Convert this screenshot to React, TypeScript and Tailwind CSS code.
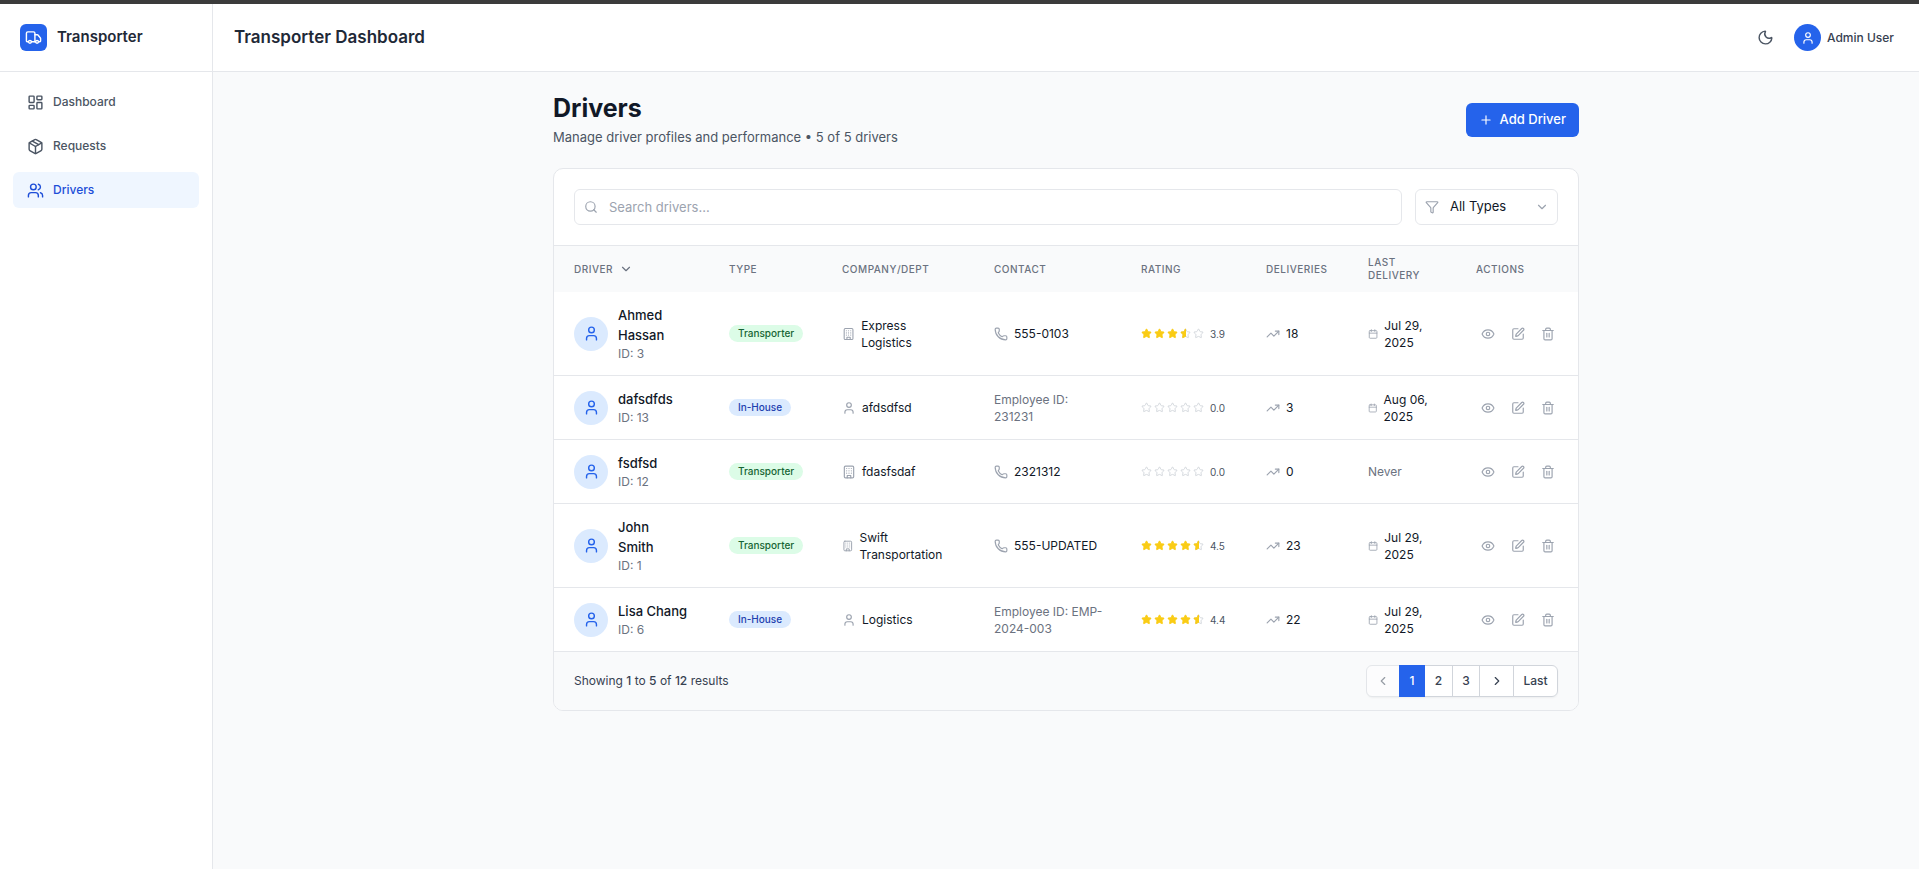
import React, { useState } from "react";
import {
  Calendar,
  ChevronDown,
  ChevronLeft,
  ChevronRight,
  Edit,
  Eye,
  Filter,
  LayoutDashboard,
  Moon,
  Package,
  Phone,
  Plus,
  Search,
  Star,
  Trash2,
  TrendingUp,
  Truck,
  User,
  Users,
} from "lucide-react";

type DriverType = "Transporter" | "In-House";

interface Driver {
  id: number;
  name: string;
  type: DriverType;
  company: string;
  phone?: string;
  employeeId?: string;
  rating: number;
  deliveries: number;
  lastDelivery?: string;
}

const drivers: Driver[] = [
  { id: 3, name: "Ahmed\nHassan", type: "Transporter", company: "Express Logistics", phone: "555-0103", rating: 3.9, deliveries: 18, lastDelivery: "Jul 29, 2025" },
  { id: 13, name: "dafsdfds", type: "In-House", company: "afdsdfsd", employeeId: "231231", rating: 0, deliveries: 3, lastDelivery: "Aug 06, 2025" },
  { id: 12, name: "fsdfsd", type: "Transporter", company: "fdasfsdaf", phone: "2321312", rating: 0, deliveries: 0 },
  { id: 1, name: "John\nSmith", type: "Transporter", company: "Swift Transportation", phone: "555-UPDATED", rating: 4.5, deliveries: 23, lastDelivery: "Jul 29, 2025" },
  { id: 6, name: "Lisa Chang", type: "In-House", company: "Logistics", employeeId: "EMP-2024-003", rating: 4.4, deliveries: 22, lastDelivery: "Jul 29, 2025" },
];

const navItems = [
  { label: "Dashboard", icon: LayoutDashboard, active: false },
  { label: "Requests", icon: Package, active: false },
  { label: "Drivers", icon: Users, active: true },
];

function Building({ className }: { className?: string }) {
  return (
    <svg
      viewBox="0 0 24 24"
      fill="none"
      stroke="currentColor"
      strokeWidth="2"
      strokeLinecap="round"
      strokeLinejoin="round"
      className={className}
      aria-hidden="true"
    >
      <rect width="16" height="20" x="4" y="2" rx="2" ry="2" />
      <path d="M9 22v-4h6v4" />
      <path d="M8 6h.01M16 6h.01M12 6h.01M12 10h.01M12 14h.01M16 10h.01M16 14h.01M8 10h.01M8 14h.01" />
    </svg>
  );
}

function Sidebar() {
  return (
    <aside className="flex w-[213px] shrink-0 flex-col border-r border-[#e5e7eb] bg-white">
      <div className="flex h-[68px] items-center gap-[10px] border-b border-[#e5e7eb] px-5">
        <div className="flex size-[27px] items-center justify-center rounded-md bg-[#2563eb] text-white">
          <Truck className="size-[17px]" />
        </div>
        <span className="text-[15px] font-semibold text-[#1f2937]">Transporter</span>
      </div>
      <nav className="flex flex-col gap-2 px-[13px] pt-3">
        {navItems.map(({ label, icon: Icon, active }) => (
          <a
            key={label}
            href="#"
            className={`flex h-9 items-center gap-[9px] rounded-md px-[14px] text-[12px] font-medium ${
              active ? "bg-[#eff6ff] text-[#1d4ed8]" : "text-[#4b5563]"
            }`}
          >
            <Icon className="size-[17px]" />
            {label}
          </a>
        ))}
      </nav>
    </aside>
  );
}

function Header() {
  return (
    <header className="flex h-[68px] items-center justify-between border-b border-[#e5e7eb] bg-white pl-[21px] pr-[25px]">
      <h2 className="text-[17px] font-semibold text-[#1f2937]">Transporter Dashboard</h2>
      <div className="flex items-center gap-5">
        <button type="button" aria-label="Toggle dark mode" className="text-[#4b5563]">
          <Moon className="size-[17px]" />
        </button>
        <button type="button" className="flex items-center gap-[6px] text-[12px] font-medium text-[#374151]">
          <span className="flex size-[27px] items-center justify-center rounded-full bg-[#2563eb] text-white">
            <User className="size-[14px]" />
          </span>
          Admin User
        </button>
      </div>
    </header>
  );
}

function Rating({ value }: { value: number }) {
  const full = Math.floor(value);
  const half = value - full > 0;
  return (
    <div className="flex items-center gap-[6px]">
      <div className="flex gap-[2px]">
        {[0, 1, 2, 3, 4].map((i) =>
          i < full ? (
            <Star key={i} className="size-[11px] fill-[#facc15] text-[#facc15]" />
          ) : (
            <span key={i} className="relative size-[11px]">
              <Star className="size-[11px] text-[#d1d5db]" />
              {i === full && half && (
                <span className="absolute inset-y-0 left-0 w-1/2 overflow-hidden">
                  <Star className="size-[11px] fill-[#facc15] text-[#facc15]" />
                </span>
              )}
            </span>
          ),
        )}
      </div>
      <span className="text-[10px] leading-[14px] text-[#4b5563]">{value.toFixed(1)}</span>
    </div>
  );
}

function DriverRow({ driver }: { driver: Driver }) {
  const external = driver.type === "Transporter";
  const CompanyIcon = external ? Building : User;
  return (
    <tr className="border-b border-[#e5e7eb] last:border-b-0">
      <td className="py-[13px] pl-5 pr-4">
        <div className="flex items-center gap-[10px]">
          <div className="flex size-[34px] shrink-0 items-center justify-center rounded-full bg-[#dbeafe] text-[#2563eb]">
            <User className="size-[17px]" />
          </div>
          <div>
            <div className="whitespace-pre-line text-[13px] font-medium leading-5 text-[#111827]">{driver.name}</div>
            <div className="text-[12px] leading-[17px] text-[#6b7280]">ID: {driver.id}</div>
          </div>
        </div>
      </td>
      <td className="px-5">
        <div className="flex">
          <span
            className={`flex h-[17px] items-center rounded-full px-[9px] text-[10px] font-medium ${
              external ? "bg-[#dcfce7] text-[#166534]" : "bg-[#dbeafe] text-[#1e40af]"
            }`}
          >
            {driver.type}
          </span>
        </div>
      </td>
      <td className="px-5">
        <div className="flex items-center gap-[6px] text-[12px] leading-[17px] text-[#111827]">
          <CompanyIcon className="size-[14px] text-[#9ca3af]" />
          <span>{driver.company}</span>
        </div>
      </td>
      <td className="pl-5 pr-4">
        {driver.phone ? (
          <div className="flex items-center gap-[6px] text-[12px] leading-[17px] text-[#111827]">
            <Phone className="size-[14px] text-[#9ca3af]" />
            <span>{driver.phone}</span>
          </div>
        ) : (
          <div className="text-[12px] leading-[17px] text-[#6b7280]">Employee ID: {driver.employeeId}</div>
        )}
      </td>
      <td className="px-5">
        <Rating value={driver.rating} />
      </td>
      <td className="px-5">
        <div className="flex items-center gap-[6px] text-[12px] leading-[17px] text-[#111827]">
          <TrendingUp className="size-[14px] text-[#9ca3af]" />
          {driver.deliveries}
        </div>
      </td>
      <td className="px-5">
        {driver.lastDelivery ? (
          <div className="flex items-center gap-[6px] text-[12px] leading-[17px] text-[#111827]">
            <Calendar className="size-[14px] text-[#9ca3af]" />
            <span>{driver.lastDelivery}</span>
          </div>
        ) : (
          <div className="text-[12px] leading-[17px] text-[#6b7280]">Never</div>
        )}
      </td>
      <td className="px-5">
        <div className="flex gap-[2px] text-[#9ca3af]">
          <button type="button" aria-label={`View ${driver.name}`} className="p-[7px] pl-[5px]">
            <Eye className="size-[14px]" />
          </button>
          <button type="button" aria-label={`Edit ${driver.name}`} className="p-[7px]">
            <Edit className="size-[14px]" />
          </button>
          <button type="button" aria-label={`Delete ${driver.name}`} className="p-[7px]">
            <Trash2 className="size-[14px]" />
          </button>
        </div>
      </td>
    </tr>
  );
}

function DriversTable() {
  return (
    <table className="w-full table-fixed text-left">
      <colgroup>
        <col className="w-[155px]" />
        <col className="w-[113px]" />
        <col className="w-[152px]" />
        <col className="w-[147px]" />
        <col className="w-[125px]" />
        <col className="w-[102px]" />
        <col className="w-[108px]" />
        <col />
      </colgroup>
      <thead className="bg-[#f9fafb]">
        <tr className="h-[46px] text-[10px] uppercase leading-[13px] tracking-wider text-[#6b7280]">
          <th className="px-5 font-medium">
            <button type="button" className="flex items-center gap-[6px] font-medium uppercase tracking-wider">
              Driver
              <ChevronDown className="size-[14px]" />
            </button>
          </th>
          <th className="px-5 font-medium">Type</th>
          <th className="px-5 font-medium">Company/Dept</th>
          <th className="px-5 font-medium">Contact</th>
          <th className="px-5 font-medium">Rating</th>
          <th className="px-5 font-medium">Deliveries</th>
          <th className="px-5 font-medium">Last Delivery</th>
          <th className="px-5 font-medium">Actions</th>
        </tr>
      </thead>
      <tbody className="bg-white">
        {drivers.map((d) => (
          <DriverRow key={d.id} driver={d} />
        ))}
      </tbody>
    </table>
  );
}

function Pagination() {
  const cell = "-ml-px flex items-center justify-center border border-[#d1d5db] bg-white";
  return (
    <div className="flex items-center justify-between border-t border-[#e5e7eb] bg-[#f9fafb] px-5 py-[13px]">
      <p className="text-[12px] text-[#374151]">
        Showing <span className="font-medium">1</span> to <span className="font-medium">5</span> of{" "}
        <span className="font-medium">12</span> results
      </p>
      <nav aria-label="Pagination" className="flex h-8 rounded-md text-[12px] font-medium text-[#374151] shadow-xs">
        <button type="button" disabled aria-label="Previous page" className={`${cell} w-[34px] rounded-l-md opacity-50`}>
          <ChevronLeft className="size-[14px]" />
        </button>
        <button type="button" className="relative -ml-px flex w-[26px] items-center justify-center bg-[#2563eb] text-white">
          1
        </button>
        <button type="button" className={`${cell} w-[29px]`}>2</button>
        <button type="button" className={`${cell} w-[28px]`}>3</button>
        <button type="button" aria-label="Next page" className={`${cell} w-[35px]`}>
          <ChevronRight className="size-[14px]" />
        </button>
        <button type="button" className={`${cell} w-[45px] rounded-r-md`}>Last</button>
      </nav>
    </div>
  );
}

export default function App() {
  const [query, setQuery] = useState("");
  return (
    <div className="flex min-h-screen flex-col bg-[#f9fafb] font-['Inter',sans-serif]">
      <div className="h-1 bg-[#3b3b3b]" />
      <div className="flex flex-1">
        <Sidebar />
        <div className="min-w-0 flex-1">
          <Header />
          <main className="mx-auto max-w-[1026px] pt-5">
            <div className="flex items-center justify-between">
              <div>
                <h1 className="text-[25px] font-bold leading-8 text-[#111827]">Drivers</h1>
                <p className="mt-[3px] text-[13px] leading-5 text-[#4b5563]">
                  Manage driver profiles and performance • 5 of 5 drivers
                </p>
              </div>
              <button
                type="button"
                className="flex h-[34px] items-center gap-[7px] rounded-md bg-[#2563eb] px-[13px] text-[13px] font-medium text-white"
              >
                <Plus className="size-[14px]" />
                Add Driver
              </button>
            </div>
            <section className="mt-[21px] overflow-hidden rounded-[10px] border border-[#e5e7eb] bg-white">
              <div className="flex gap-[13px] border-b border-[#e5e7eb] p-5">
                <div className="relative flex-1">
                  <Search className="absolute left-[10px] top-[11px] size-[14px] text-[#9ca3af]" />
                  <input
                    type="text"
                    aria-label="Search drivers"
                    value={query}
                    onChange={(e) => setQuery(e.target.value)}
                    placeholder="Search drivers..."
                    className="h-9 w-full rounded-md border border-[#e5e7eb] bg-white pl-[34px] pr-3 text-[13px] text-[#111827] placeholder:text-[#9ca3af]"
                  />
                </div>
                <div className="relative w-[143px]">
                  <Filter className="absolute left-[10px] top-[11px] size-[14px] text-[#9ca3af]" />
                  <select
                    aria-label="Driver type"
                    className="h-9 w-full appearance-none rounded-md border border-[#e5e7eb] bg-white pl-[34px] pr-8 text-[13px] text-[#111827]"
                  >
                    <option>All Types</option>
                    <option>Transporter</option>
                    <option>In-House</option>
                  </select>
                  <ChevronDown className="pointer-events-none absolute right-[9px] top-[11px] size-[14px] text-[#9ca3af]" />
                </div>
              </div>
              <DriversTable />
              <Pagination />
            </section>
          </main>
        </div>
      </div>
    </div>
  );
}
